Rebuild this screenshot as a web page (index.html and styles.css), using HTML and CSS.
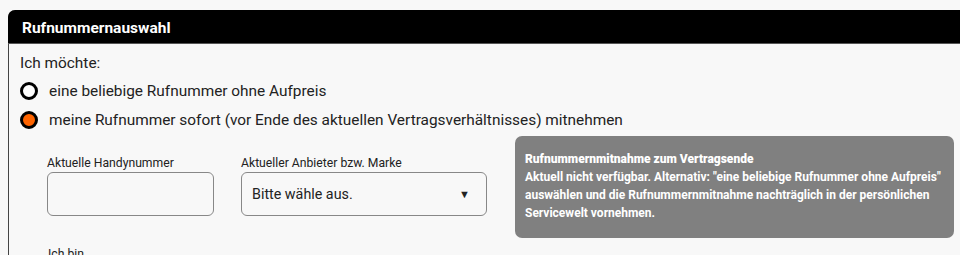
FILE: index.html
```html
<!DOCTYPE html>
<html lang="de">
<head>
<meta charset="utf-8">
<link rel="stylesheet" href="styles.css">
</head>
<body>
<section class="card">
  <header class="card-head">Rufnummernauswahl</header>
  <div class="card-body">
    <p class="intro">Ich möchte:</p>
    <label class="radio-row"><span class="radio"></span><span>eine beliebige Rufnummer ohne Aufpreis</span></label>
    <label class="radio-row"><span class="radio checked"></span><span>meine Rufnummer sofort (vor Ende des aktuellen Vertragsverhältnisses) mitnehmen</span></label>
    <div class="port-row">
      <div class="field">
        <div class="field-label">Aktuelle Handynummer</div>
        <div class="input"></div>
      </div>
      <div class="field wide">
        <div class="field-label">Aktueller Anbieter bzw. Marke</div>
        <div class="input select"><span>Bitte wähle aus.</span><span class="caret">▼</span></div>
      </div>
      <div class="notice">
        <strong>Rufnummernmitnahme zum Vertragsende</strong><br>
        Aktuell nicht verfügbar. Alternativ: "eine beliebige Rufnummer ohne Aufpreis" auswählen und die Rufnummernmitnahme nachträglich in der persönlichen Servicewelt vornehmen.
      </div>
    </div>
    <div class="field-label next">Ich bin</div>
  </div>
</section>
</body>
</html>
```
FILE: styles.css
```css
html, body {
  margin: 0;
  background: #f8f8f8;
}
body {
  padding: 10px 0 0 8px;
  font-family: Roboto, "Liberation Sans", sans-serif;
  color: #222;
  overflow: hidden;
}
.card {
  width: 960px;
  border-left: 1px solid #444;
  border-top-left-radius: 8px;
  border-top-right-radius: 8px;
}
.card-head {
  background: #000;
  color: #fff;
  font-weight: 700;
  font-size: 15.5px;
  height: 33px;
  line-height: 36px;
  padding-left: 14px;
  border-top-left-radius: 7px;
  border-top-right-radius: 8px;
  border-bottom: 1px solid #555;
  margin-left: -1px;
}
.card-body {
  padding: 9px 0 0 11px;
}
.intro {
  margin: 0 0 3px;
  font-size: 15.4px;
  line-height: 20px;
}
.radio-row {
  display: flex;
  align-items: center;
  gap: 11px;
  font-size: 15.4px;
  height: 29px;
}
.radio {
  width: 12px;
  height: 12px;
  border: 3px solid #000;
  border-radius: 50%;
  background: #fff;
  box-sizing: content-box;
}
.radio.checked {
  background: #ff6400;
}
.port-row {
  display: flex;
  align-items: flex-start;
  padding-left: 27px;
  margin-top: 2px;
}
.field {
  padding-top: 20px;
  width: 167px;
  margin-right: 27px;
}
.field.wide {
  width: 246px;
}
.field-label {
  font-size: 12.2px;
  line-height: 14px;
  margin-bottom: 2px;
}
.input {
  box-sizing: border-box;
  height: 44px;
  border: 1px solid #888;
  border-radius: 6px;
  background: #f8f8f8;
}
.select {
  display: flex;
  align-items: center;
  justify-content: space-between;
  padding: 0 16px 0 10px;
  font-size: 14.3px;
}
.caret {
  font-size: 11px;
}
.notice {
  margin-left: 1px;
  width: 427px;
  background: #808080;
  color: #fff;
  font-weight: 700;
  font-size: 12px;
  line-height: 18px;
  border-radius: 7px;
  padding: 14px 2px 16px 10px;
}
.next {
  padding-left: 28px;
  margin-top: 9px;
}
```
